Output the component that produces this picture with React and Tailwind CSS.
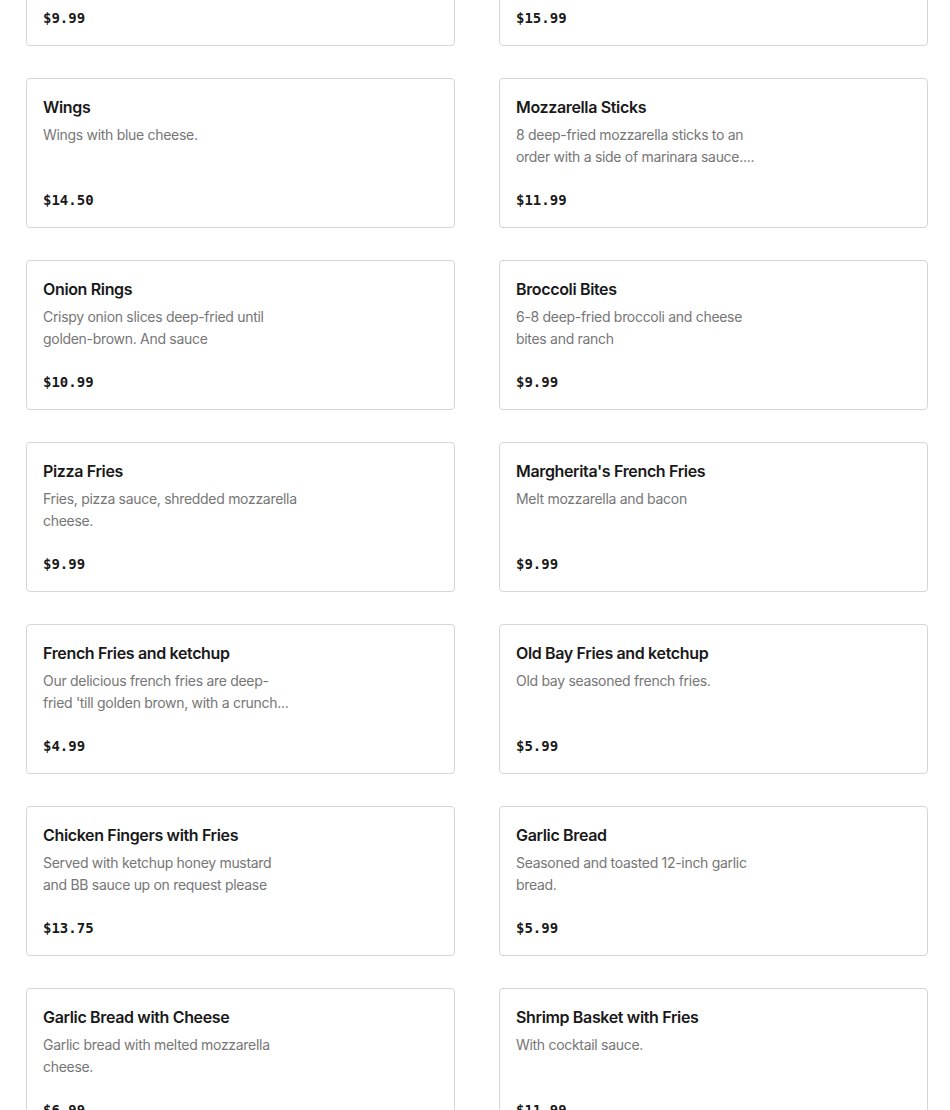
import React from "react";

const items = [
  { name: "", lines: [], price: "$9.99" },
  { name: "", lines: [], price: "$15.99" },
  { name: "Wings", lines: ["Wings with blue cheese."], price: "$14.50" },
  { name: "Mozzarella Sticks", lines: ["8 deep-fried mozzarella sticks to an", "order with a side of marinara sauce...."], price: "$11.99" },
  { name: "Onion Rings", lines: ["Crispy onion slices deep-fried until", "golden-brown. And sauce"], price: "$10.99" },
  { name: "Broccoli Bites", lines: ["6-8 deep-fried broccoli and cheese", "bites and ranch"], price: "$9.99" },
  { name: "Pizza Fries", lines: ["Fries, pizza sauce, shredded mozzarella", "cheese."], price: "$9.99" },
  { name: "Margherita's French Fries", lines: ["Melt mozzarella and bacon"], price: "$9.99" },
  { name: "French Fries and ketchup", lines: ["Our delicious french fries are deep-", "fried 'till golden brown, with a crunch..."], price: "$4.99" },
  { name: "Old Bay Fries and ketchup", lines: ["Old bay seasoned french fries."], price: "$5.99" },
  { name: "Chicken Fingers with Fries", lines: ["Served with ketchup honey mustard", "and BB sauce up on request please"], price: "$13.75" },
  { name: "Garlic Bread", lines: ["Seasoned and toasted 12-inch garlic", "bread."], price: "$5.99" },
  { name: "Garlic Bread with Cheese", lines: ["Garlic bread with melted mozzarella", "cheese."], price: "$6.99" },
  { name: "Shrimp Basket with Fries", lines: ["With cocktail sauce."], price: "$11.99" },
];

function Card({ item }) {
  return (
    <div className="h-[150px] rounded-[4px] border border-[#d6d6d6] bg-white px-4 pt-4 pb-[17px] flex flex-col">
      <div className="text-[16px] leading-[24px] font-semibold text-[#191919] tracking-[-0.35px] whitespace-nowrap">
        {item.name}
      </div>
      <div className="mt-[5px] h-[44px] text-[14px] leading-[22px] text-[#767676] tracking-[-0.3px]">
        {item.lines.map((l, i) => (
          <div key={i} className="whitespace-nowrap">{l}</div>
        ))}
      </div>
      <div className="mt-auto text-[14px] leading-[20px] font-bold text-[#191919] font-['DejaVu_Sans_Mono',monospace]">
        {item.price}
      </div>
    </div>
  );
}

export default function App() {
  return (
    <div className="w-[950px] h-[1110px] overflow-hidden bg-white font-['Inter',sans-serif]">
      <div className="-mt-[104px] pl-[26px] pr-[22px] grid grid-cols-2 gap-x-[44px] gap-y-[32px]">
        {items.map((it, i) => (
          <Card key={i} item={it} />
        ))}
      </div>
    </div>
  );
}
